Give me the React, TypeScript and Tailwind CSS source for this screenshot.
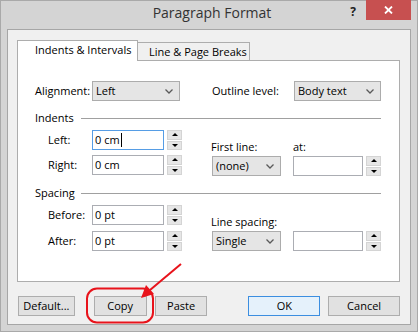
import React from 'react';

function Chevron() {
  return (
    <svg width="8" height="5" viewBox="0 0 8 5" className="shrink-0">
      <polyline points="0.5,0.5 4,4 7.5,0.5" fill="none" stroke="#5a5a5a" strokeWidth="1.3" />
    </svg>
  );
}

function Select({ w, text }: { w: string; text: string }) {
  return (
    <div className={`${w} h-[20px] border border-[#acacac] bg-[#e5e5e5] flex items-center justify-between pl-[3px] pr-[6px]`}>
      <span>{text}</span>
      <Chevron />
    </div>
  );
}

function Spinner() {
  return (
    <div className="w-[15px] h-[20px] flex flex-col gap-px ml-[3px]">
      <div className="flex-1 bg-[#e6e6e6] border border-[#d4d4d4] flex items-center justify-center">
        <svg width="6" height="3" viewBox="0 0 6 3">
          <polygon points="0,3 3,0 6,3" fill="#000" />
        </svg>
      </div>
      <div className="flex-1 bg-[#e6e6e6] border border-[#d4d4d4] flex items-center justify-center">
        <svg width="6" height="3" viewBox="0 0 6 3">
          <polygon points="0,0 6,0 3,3" fill="#000" />
        </svg>
      </div>
    </div>
  );
}

function Input({ w, text, focus }: { w: string; text?: string; focus?: boolean }) {
  return (
    <div className="flex items-center">
      <div
        className={`${w} h-[20px] bg-white border ${focus ? 'border-[#569de5]' : 'border-[#abadb3]'} flex items-center pl-[2px]`}
      >
        <span>{text}</span>
        {focus && <span className="w-px h-[14px] bg-black ml-px" />}
      </div>
      <Spinner />
    </div>
  );
}

function Section({ title }: { title: string }) {
  return (
    <div className="flex items-center h-[14px] mt-[10px]">
      <span className="w-[46px]">{title}</span>
      <div className="flex-1 h-px bg-[#a0a0a0]" />
    </div>
  );
}

function Row({ label, text, focus }: { label: string; text: string; focus?: boolean }) {
  return (
    <div className="flex items-center">
      <span className="w-[44px] ml-[13px]">{label}</span>
      <Input w="w-[72px]" text={text} focus={focus} />
    </div>
  );
}

function Button({ w, label, primary }: { w: string; label: string; primary?: boolean }) {
  return (
    <div
      className={`${w} h-[20px] border ${primary ? 'border-[#3c8ee0] bg-[#e5f1fb]' : 'border-[#adadad] bg-[#e1e1e1]'} flex items-center justify-center`}
    >
      {label}
    </div>
  );
}

export default function App() {
  return (
    <div className="relative w-[418px] h-[332px] bg-[#d4d4d4] border border-[#a9a9a9] flex flex-col px-[6px] pb-[6px] text-[11px] leading-[14px] text-black font-['Open_Sans',sans-serif]">
      {/* title bar */}
      <div className="h-[28px] grid grid-cols-[1fr_auto_1fr] -mr-[6px]">
        <div />
        <div className="text-[14px] text-[#333] pt-[5px]">Paragraph Format</div>
        <div className="flex justify-end items-start">
          <span className="font-bold text-[12px] text-[#222] mt-[4px] mr-[10px]">?</span>
          <div className="w-[45px] h-[20px] -mt-px bg-[#c75050] flex items-center justify-center mr-[6px]">
            <svg width="9" height="8" viewBox="0 0 9 8">
              <path d="M1 0.5 L8 7.5 M8 0.5 L1 7.5" stroke="#fff" strokeWidth="1.8" />
            </svg>
          </div>
        </div>
      </div>

      {/* client */}
      <div className="flex-1 border border-[#a6a6a6] bg-[#f0f0f0] pl-[9px] pr-[10px] pt-[10px] flex flex-col">
        {/* tabs */}
        <div className="flex items-end h-[20px]">
          <div className="w-[121px] h-[21px] bg-white border border-b-0 border-[#adadad] relative z-10 -mb-px pl-[17px] pt-[2px]">
            Indents &amp; Intervals
          </div>
          <div className="w-[112px] h-[18px] border border-b-0 border-l-0 border-[#adadad] bg-[#f0f0f0] pl-[11px] pt-[2px]">
            Line &amp; Page Breaks
          </div>
        </div>

        {/* panel */}
        <div className="h-[222px] bg-white border border-[#adadad] pl-[17px] pr-[18px] pt-[20px] flex flex-col">
          <div className="flex items-center">
            <span className="w-[57px]">Alignment:</span>
            <Select w="w-[88px]" text="Left" />
            <span className="w-[82px] ml-[32px]">Outline level:</span>
            <Select w="w-[87px]" text="Body text" />
          </div>

          <Section title="Indents" />
          <div className="flex mt-[5px]">
            <div className="flex flex-col gap-[5px] w-[177px]">
              <Row label="Left:" text="0 cm" focus />
              <Row label="Right:" text="0 cm" />
            </div>
            <div className="flex flex-col">
              <div className="flex mt-[10px]">
                <span className="w-[82px]">First line:</span>
                <span>at:</span>
              </div>
              <div className="flex mt-[2px] items-center">
                <Select w="w-[69px] ml-px" text="(none)" />
                <div className="ml-[12px]">
                  <Input w="w-[70px]" />
                </div>
              </div>
            </div>
          </div>

          <Section title="Spacing" />
          <div className="flex mt-[5px]">
            <div className="flex flex-col gap-[6px] w-[177px]">
              <Row label="Before:" text="0 pt" />
              <Row label="After:" text="0 pt" />
            </div>
            <div className="flex flex-col">
              <div className="mt-[10px]">Line spacing:</div>
              <div className="flex mt-[2px] items-center">
                <Select w="w-[69px] ml-px" text="Single" />
                <div className="ml-[12px]">
                  <Input w="w-[70px]" />
                </div>
              </div>
            </div>
          </div>
        </div>

        {/* buttons */}
        <div className="flex items-center mt-[14px] pl-px">
          <Button w="w-[57px]" label="Default..." />
          <Button w="w-[53px] ml-[19px]" label="Copy" />
          <Button w="w-[53px] ml-[8px]" label="Paste" />
          <Button w="w-[72px] ml-[41px]" label="OK" primary />
          <Button w="w-[72px] ml-[8px]" label="Cancel" />
        </div>
      </div>

      {/* annotation overlay */}
      <svg className="absolute left-0 top-0 pointer-events-none" width="418" height="332" viewBox="0 0 418 332">
        <rect x="86" y="287.5" width="66" height="34" rx="10" fill="none" stroke="#e8131b" strokeWidth="2" />
        <line x1="180" y1="263" x2="149" y2="289" stroke="#e8131b" strokeWidth="2" />
        <polygon points="140,297 145,284 153,293" fill="#e8131b" />
      </svg>
    </div>
  );
}
